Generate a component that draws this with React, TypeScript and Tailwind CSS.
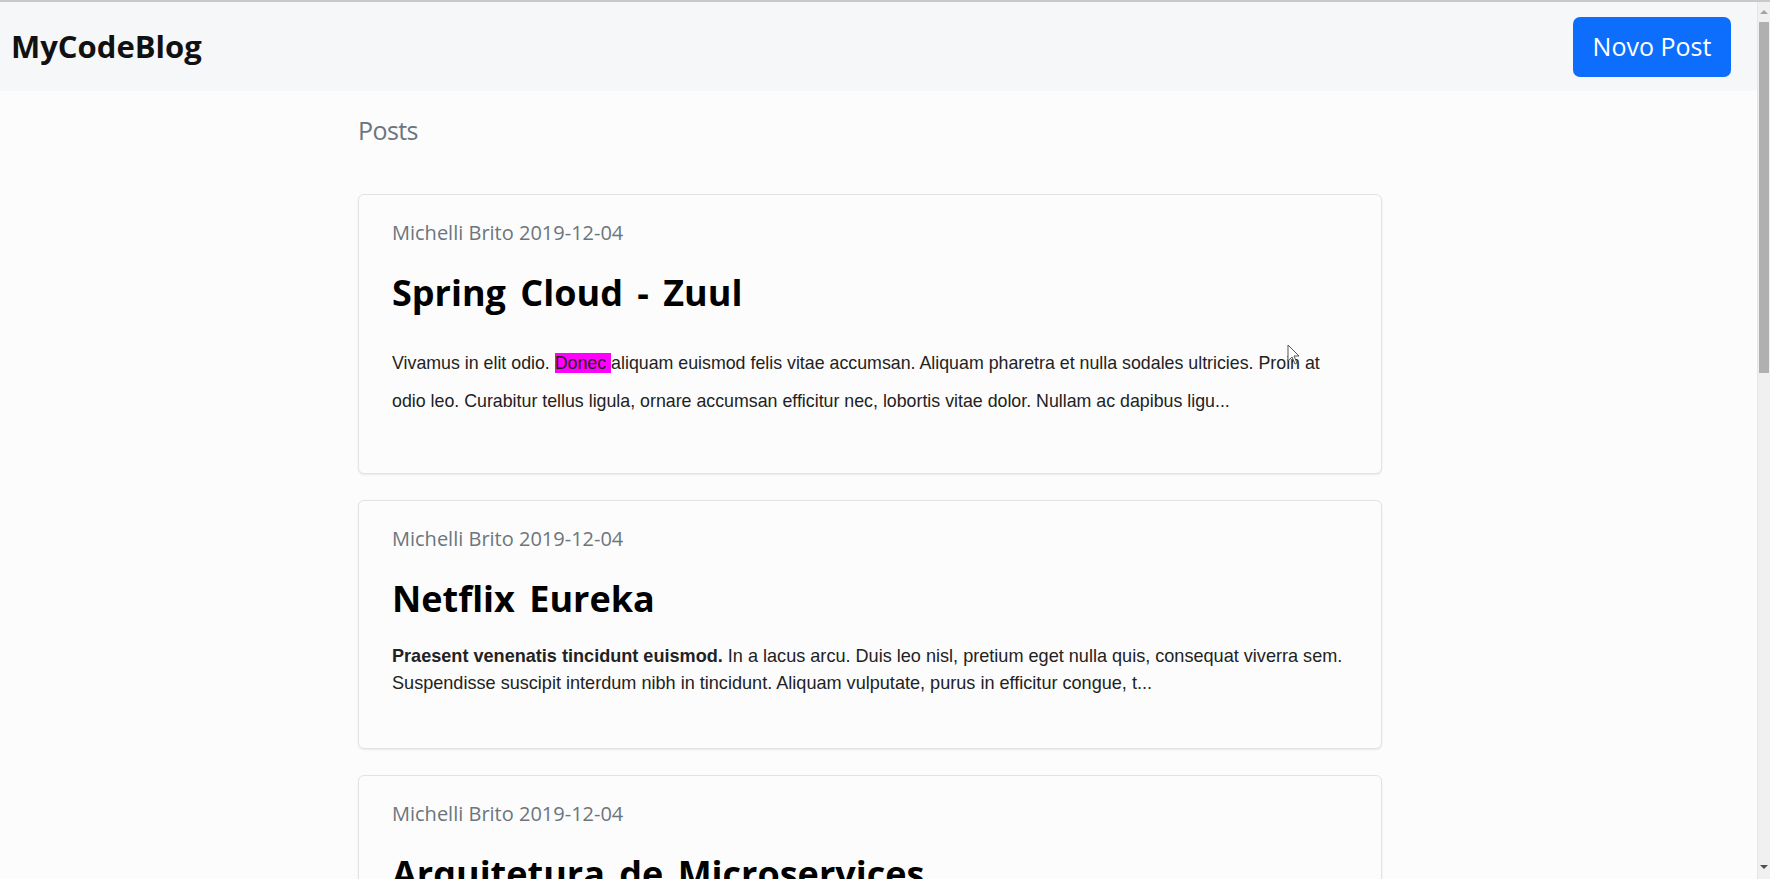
import React from "react";

const sans = { fontFamily: '"Open Sans", "Noto Sans", sans-serif' };

function Card({
  title,
  children,
  bodyClass,
  cardClass,
}: {
  title: string;
  children: React.ReactNode;
  bodyClass: string;
  cardClass: string;
}) {
  return (
    <div className={"rounded-[6px] border border-[#e2e3e5] bg-[#fcfcfc] shadow-[0_1px_2px_rgba(0,0,0,0.08)] pt-[23px] px-[33px] " + cardClass}>
      <div className="text-[20px] leading-[30px] text-[#6c757d]" style={sans}>
        Michelli Brito 2019-12-04
      </div>
      <h3 className="mt-[24px] text-[36px] leading-[42px] font-bold text-black [word-spacing:5px]" style={sans}>
        {title}
      </h3>
      <div
        className={bodyClass}
        style={{ fontFamily: '"Liberation Sans", Arial, sans-serif' }}
      >
        {children}
      </div>
    </div>
  );
}

export default function App() {
  return (
    <div className="h-[879px] overflow-hidden flex border-t-2 border-[#c9c9c9] bg-[#fcfcfc]">
      <div className="flex-1 flex flex-col relative">
        <nav className="h-[89px] shrink-0 bg-[#f6f7f8] flex items-center justify-between pl-[11px] pr-[26px]">
          <span className="text-[31px] font-bold text-[#111]" style={sans}>
            MyCodeBlog
          </span>
          <button
            className="h-[60px] w-[158px] rounded-[7px] bg-[#0d6efd] text-white text-[25px] flex items-center justify-center"
            style={sans}
          >
            Novo Post
          </button>
        </nav>
        <div className="pl-[358px] w-[1382px]">
          <div className="mt-[23px] text-[25px] leading-[32px] tracking-[-0.6px] text-[#6c757d]" style={sans}>
            Posts
          </div>
          <div className="mt-[48px] flex flex-col gap-[26px]">
            <Card title="Spring Cloud - Zuul" cardClass="pb-[53px]" bodyClass="mt-[31px] text-[17.8px] leading-[37.5px] text-[#222]">
              Vivamus in elit odio. <span className="bg-[#ff00ff]">Donec </span>aliquam euismod felis vitae accumsan. Aliquam pharetra et nulla sodales ultricies. Proin at odio leo. Curabitur tellus ligula, ornare accumsan efficitur nec, lobortis vitae dolor. Nullam ac dapibus ligu...
            </Card>
            <Card title="Netflix Eureka" cardClass="pb-[51px]" bodyClass="mt-[23px] text-[18.1px] leading-[27px] text-[#222]">
              <b>Praesent venenatis tincidunt euismod.</b> In a lacus arcu. Duis leo nisl, pretium eget nulla quis, consequat viverra sem. Suspendisse suscipit interdum nibh in tincidunt. Aliquam vulputate, purus in efficitur congue, t...
            </Card>
            <Card title="Arquitetura de Microservices" cardClass="pb-[51px]" bodyClass="mt-[23px] text-[18px] leading-[27px] text-[#222]">
              Lorem ipsum dolor sit amet, consectetur adipiscing elit. Sed non risus. Suspendisse lectus tortor, dignissim sit amet, adipiscing nec, ultricies sed, dolor...
            </Card>
          </div>
        </div>
        <svg
          className="absolute left-[1287px] top-[342px]"
          width="13"
          height="21"
          viewBox="0 0 13 21"
        >
          <path
            d="M1 1 L1 17 L5 13 L8 20 L10 19 L7 12 L12 12 Z"
            fill="#fff"
            stroke="#555"
            strokeWidth="1"
            strokeLinejoin="round"
          />
        </svg>
      </div>
      <div className="w-[13px] shrink-0 bg-[#f0f0f0] border-l border-[#e6e6e6] flex flex-col items-center">
        <div className="h-[20px] flex items-center justify-center">
          <div className="w-0 h-0 border-l-[4px] border-r-[4px] border-b-[4px] border-l-transparent border-r-transparent border-b-[#a3a3a3]" />
        </div>
        <div className="w-[10px] h-[351px] bg-[#b0b0b0]" />
        <div className="flex-1" />
        <div className="h-[20px] flex items-center justify-center mb-[2px]">
          <div className="w-0 h-0 border-l-[4px] border-r-[4px] border-t-[4px] border-l-transparent border-r-transparent border-t-[#505050]" />
        </div>
      </div>
    </div>
  );
}
